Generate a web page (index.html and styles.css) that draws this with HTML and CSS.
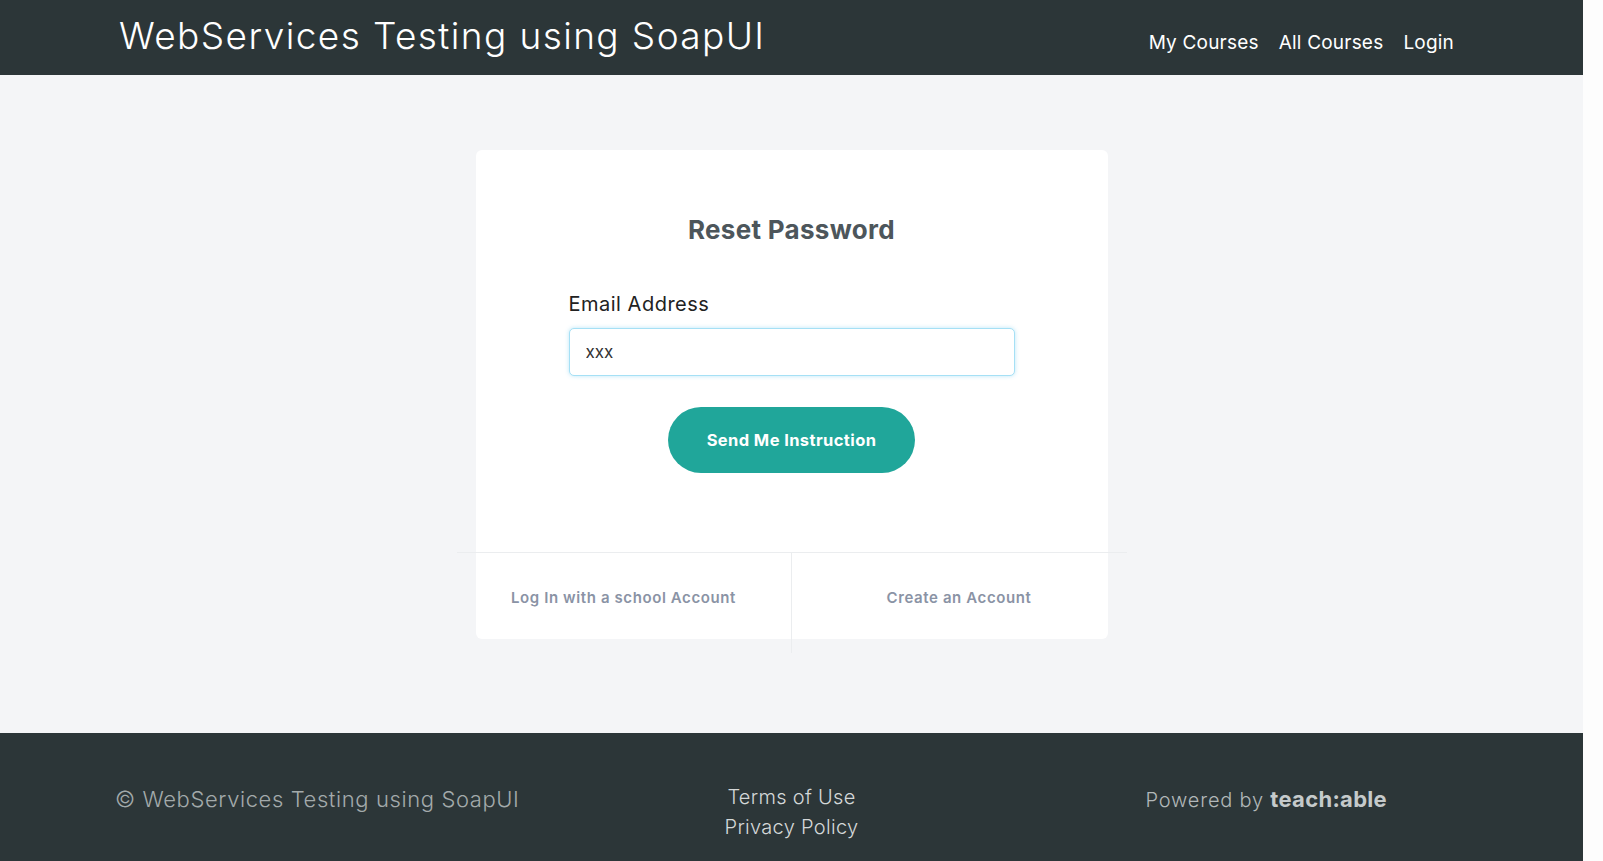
FILE: index.html
```html
<!DOCTYPE html>
<html lang="en">
<head>
<meta charset="utf-8">
<title>Reset Password - WebServices Testing using SoapUI</title>
<link rel="stylesheet" href="styles.css">
</head>
<body>
<div class="page">
  <header class="topbar">
    <a class="brand" href="#">WebServices Testing using SoapUI</a>
    <nav class="nav">
      <a href="#">My Courses</a>
      <a href="#">All Courses</a>
      <a href="#">Login</a>
    </nav>
  </header>

  <main class="main">
    <section class="card">
      <div class="card-body">
        <h1 class="card-title">Reset Password</h1>
        <form class="form">
          <label class="label" for="email">Email Address</label>
          <input class="input" id="email" type="email" value="xxx">
          <div class="actions">
            <button class="btn" type="button">Send Me Instruction</button>
          </div>
        </form>
      </div>
      <div class="card-links">
        <a class="card-link" href="#">Log In with a school Account</a>
        <a class="card-link" href="#">Create an Account</a>
      </div>
    </section>
  </main>

  <footer class="footer">
    <div class="foot-left">© WebServices Testing using SoapUI</div>
    <div class="foot-mid">
      <a href="#">Terms of Use</a>
      <a href="#">Privacy Policy</a>
    </div>
    <div class="foot-right">Powered by <span class="tlogo">teach:able</span></div>
  </footer>
</div>
</body>
</html>
```

FILE: styles.css
```css
html, body {
  margin: 0;
  padding: 0;
  background: #fdfdfd;
  height: 100%;
}

body {
  font-family: Inter, "Noto Sans", "DejaVu Sans", sans-serif;
  color: #333;
}

a {
  text-decoration: none;
  color: inherit;
}

.page {
  margin-right: 20px;
  display: flex;
  flex-direction: column;
  min-height: 861px;
}

/* Header */
.topbar {
  height: 75px;
  background: #2c3638;
  display: flex;
  align-items: flex-start;
  justify-content: space-between;
  padding: 0 129px 0 119px;
  box-sizing: border-box;
}

.brand {
  color: #fff;
  font-size: 37px;
  font-weight: 300;
  line-height: 44px;
  padding-top: 14px;
  letter-spacing: 1.4px;
}

.nav {
  display: flex;
  gap: 20px;
  padding-top: 30px;
}

.nav a {
  color: #fff;
  font-size: 19px;
  line-height: 26px;
  font-weight: 400;
  letter-spacing: 0.2px;
}

/* Main */
.main {
  flex: 0 0 658px;
  background: #f4f5f7;
  display: flex;
  justify-content: center;
  padding-top: 75px;
  box-sizing: border-box;
}

.card {
  width: 632px;
  height: 489px;
  background: #fff;
  border-radius: 6px;
  display: flex;
  flex-direction: column;
}

.card-body {
  height: 403px;
  padding-top: 63px;
  box-sizing: border-box;
}

.card-title {
  margin: 0;
  text-align: center;
  font-size: 26px;
  line-height: 34px;
  font-weight: 700;
  color: #4d565b;
  letter-spacing: 0.3px;
}

.form {
  width: 446px;
  margin: 44px auto 0;
  display: flex;
  flex-direction: column;
}

.label {
  font-size: 20px;
  line-height: 26px;
  font-weight: 400;
  color: #222;
  margin-bottom: 11px;
  letter-spacing: 0.5px;
}

.input {
  height: 48px;
  box-sizing: border-box;
  border: 1px solid #a6e0f5;
  border-radius: 5px;
  box-shadow: 0 0 4px rgba(102, 200, 240, 0.45);
  padding: 0 16px;
  font-family: inherit;
  font-size: 17px;
  color: #333;
  outline: none;
}

.actions {
  display: flex;
  justify-content: center;
  margin-top: 31px;
}

.btn {
  width: 247px;
  height: 66px;
  border: none;
  border-radius: 33px;
  background: #20a69a;
  color: #fff;
  font-family: inherit;
  font-size: 16.5px;
  font-weight: 700;
  letter-spacing: 0.4px;
  cursor: pointer;
}

.card-links {
  margin: 0 -19px -14px;
  height: 100px;
  border-top: 1px solid #ebedef;
  display: grid;
  grid-template-columns: 1fr 1fr;
}

.card-link {
  text-align: center;
  padding-top: 35px;
  font-size: 15px;
  line-height: 20px;
  font-weight: 600;
  color: #8a93a5;
  letter-spacing: 0.6px;
}

.card-link:first-child {
  border-right: 1px solid #ebedef;
}

/* Footer */
.footer {
  flex: 1 0 128px;
  background: #2c3638;
  display: grid;
  grid-template-columns: 1fr auto 1fr;
  align-items: start;
  padding-top: 35px;
  box-sizing: border-box;
}

.foot-left {
  padding-left: 115px;
  padding-top: 17px;
  font-size: 22px;
  line-height: 28px;
  font-weight: 300;
  color: #a3aaab;
  letter-spacing: 0.6px;
}

.foot-mid {
  display: flex;
  flex-direction: column;
  align-items: center;
  padding-top: 14px;
  font-size: 20px;
  line-height: 30px;
  font-weight: 300;
  color: #d4d8d8;
  letter-spacing: 0.3px;
}

.foot-right {
  justify-self: end;
  padding-right: 196px;
  padding-top: 17px;
  font-size: 20px;
  line-height: 28px;
  font-weight: 300;
  color: #b2b8b9;
  letter-spacing: 0.8px;
}

.tlogo {
  font-weight: 700;
  font-size: 22px;
  color: #c5cacb;
  letter-spacing: 0.3px;
}
```
